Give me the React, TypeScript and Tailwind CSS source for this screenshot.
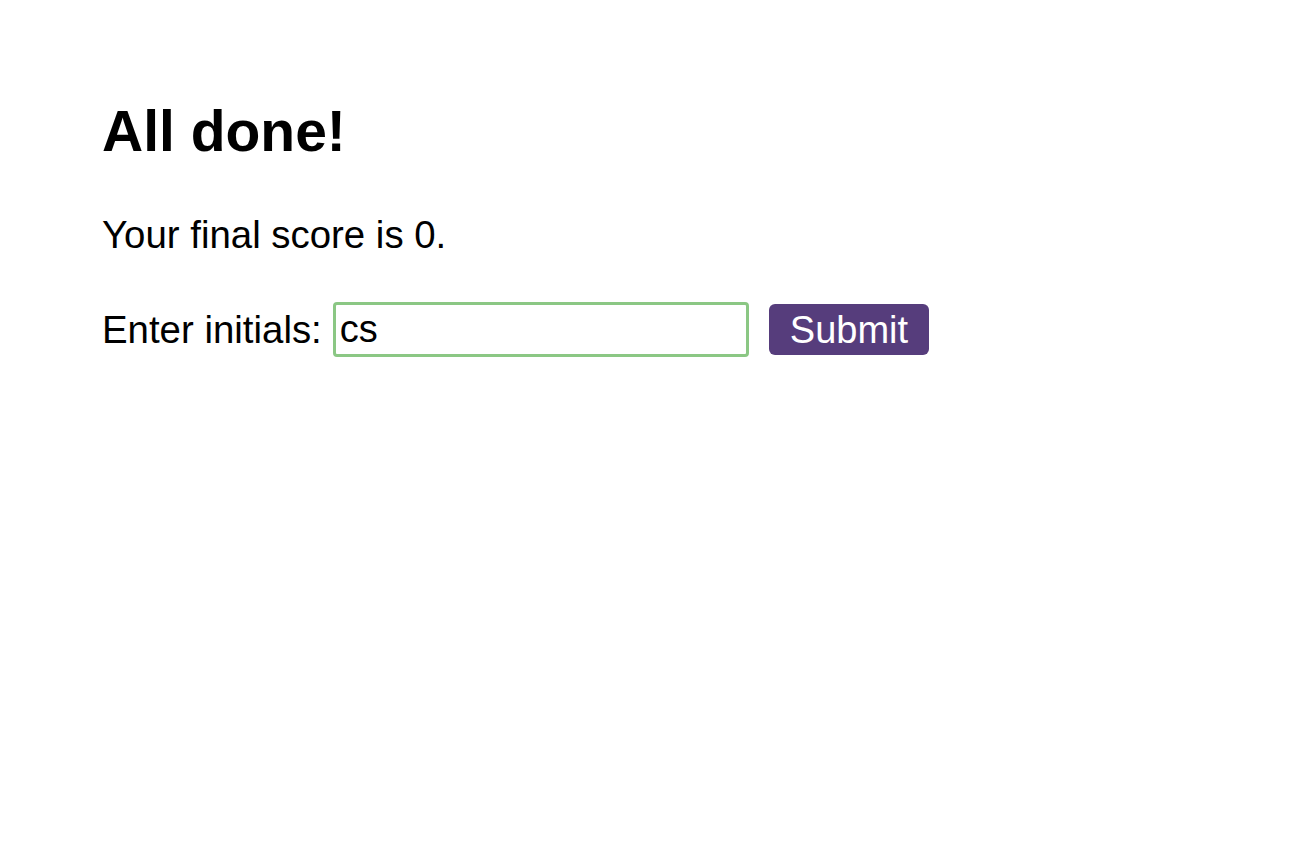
export default function App() {
  return (
    <div className="min-h-screen bg-white text-black" style={{ fontFamily: '"Liberation Sans", Arial, sans-serif' }}>
      <div className="pl-[102px] pt-[97px]">
        <h1 className="text-[57px] font-bold leading-[68px]">All done!</h1>
        <p className="mt-[48px] text-[38.4px] leading-[44px]">Your final score is 0.</p>
        <div className="mt-[45px] flex items-center">
          <label className="text-[38.4px] leading-[44px]">Enter initials:</label>
          <input
            defaultValue="cs"
            className="ml-[11px] h-[55px] w-[416px] rounded-[4px] border-[3px] border-[#8bc784] px-[4px] text-[38px] leading-[44px] outline-none"
            style={{ fontFamily: '"Liberation Sans", Arial, sans-serif' }}
          />
          <button className="ml-[20px] h-[51px] rounded-[6px] bg-[#563d7c] px-[21px] text-[38px] leading-[40px] text-white">
            Submit
          </button>
        </div>
      </div>
    </div>
  );
}
